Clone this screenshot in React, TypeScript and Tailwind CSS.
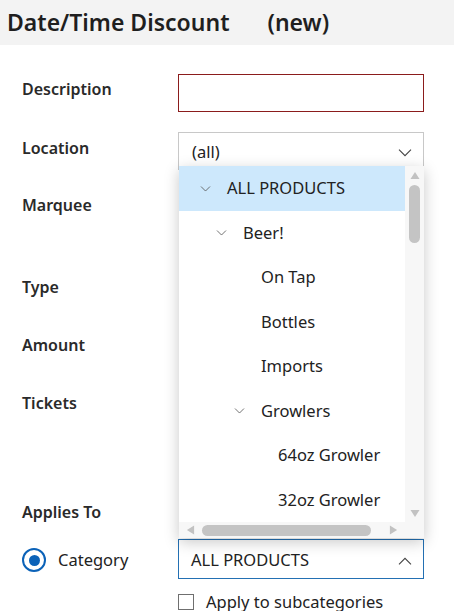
import React from 'react';

const font = "font-['Noto_Sans',sans-serif]";

interface ChevronProps {
  up?: boolean;
  className?: string;
}

const Chevron: React.FC<ChevronProps> = ({ up, className }) => (
  <svg viewBox="0 0 14 8" className={className} fill="none" stroke="currentColor" strokeWidth="1.1">
    <path d={up ? 'M1 7.3 7 1.3 13 7.3' : 'M1 0.7 7 6.7 13 0.7'} />
  </svg>
);

const Tri: React.FC<{ dir: 'up' | 'down' | 'left' | 'right'; className?: string }> = ({ dir, className }) => {
  const d = {
    up: 'M0 9 5 1 10 9Z',
    down: 'M0 1 10 1 5 9Z',
    left: 'M9 0 9 10 1 5Z',
    right: 'M1 0 1 10 9 5Z',
  }[dir];
  return (
    <svg viewBox="0 0 10 10" className={className} fill="currentColor">
      <path d={d} />
    </svg>
  );
};

const tree = [
  { label: 'ALL PRODUCTS', level: 0, open: true },
  { label: 'Beer!', level: 1, open: true },
  { label: 'On Tap', level: 2 },
  { label: 'Bottles', level: 2 },
  { label: 'Imports', level: 2 },
  { label: 'Growlers', level: 2, open: true },
  { label: '64oz Growler', level: 3 },
  { label: '32oz Growler', level: 3 },
];

const indent = ['pl-[21px]', 'pl-[37px]', 'pl-[55px]', 'pl-[72px]'];

const Row: React.FC<{ label: string; height: string; pt?: string; children?: React.ReactNode }> = ({
  label,
  height,
  pt = 'pt-[4px]',
  children,
}) => (
  <div className={`flex ${height}`}>
    <div className={`w-[156px] shrink-0 ${pt} text-[16px] leading-6 font-semibold text-[#2a2a2a]`}>{label}</div>
    <div className="relative w-[246px]">{children}</div>
  </div>
);

const Dropdown: React.FC = () => (
  <div className="absolute left-[1px] top-[34px] z-10 w-[245px] bg-white shadow-[0_4px_14px_rgba(0,0,0,0.22)]">
    <div className="flex">
      <div className="w-[226px]">
        {tree.map((item, i) => (
          <div
            key={item.label}
            className={`flex h-[44.5px] items-center pt-[1px] ${indent[item.level]} ${i === 0 ? 'bg-[#cde8fc]' : ''}`}
          >
            <div className="w-[27px] shrink-0">
              {item.open && <Chevron className="w-[11px] h-[6px] text-[#555]" />}
            </div>
            <span className="text-[16.5px] text-[#222] whitespace-nowrap">{item.label}</span>
          </div>
        ))}
      </div>
      <div className="flex w-[19px] flex-col items-center bg-[#f7f7f7] pt-[5px] pb-[4px]">
        <Tri dir="up" className="w-[10px] h-[9px] text-[#c2c2c2]" />
        <div className="mt-[5px] h-[58px] w-[11px] rounded-full bg-[#c4c4c4]" />
        <div className="flex-1" />
        <Tri dir="down" className="w-[10px] h-[9px] text-[#c2c2c2]" />
      </div>
    </div>
    <div className="flex h-[16px] items-center bg-[#f7f7f7]">
      <div className="flex w-[226px] items-center pl-[7px]">
        <Tri dir="left" className="w-[9px] h-[10px] text-[#c2c2c2]" />
        <div className="ml-[7px] h-[11px] w-[169px] rounded-full bg-[#c4c4c4]" />
        <div className="flex-1" />
        <Tri dir="right" className="mr-[7px] w-[9px] h-[10px] text-[#c2c2c2]" />
      </div>
    </div>
  </div>
);

export default function App() {
  return (
    <div className={`${font} w-[454px] h-[611px] overflow-hidden bg-white`}>
      <div className="flex h-[45px] items-center bg-[#f3f3f3] pl-[7px] text-[23px] font-semibold text-[#1f1f1f]">
        <span>Date/Time Discount</span>
        <span className="ml-[38px]">(new)</span>
      </div>

      <div className="pt-[29px] pl-[22px]">
        <Row label="Description" height="h-[58px]" pt="pt-[3px]">
          <div className="h-[38px] border border-[#8b1c1c] bg-white" />
        </Row>
        <Row label="Location" height="h-[57px]">
          <div className="flex h-[38px] items-center justify-between border border-[#c8c8c8] pl-[13px] pr-[11px] pt-[3px]">
            <span className="text-[16.5px] text-[#222]">(all)</span>
            <Chevron className="w-[14px] h-[8px] text-[#444]" />
          </div>
          <Dropdown />
        </Row>
        <Row label="Marquee" height="h-[82px]" />
        <Row label="Type" height="h-[58px]" />
        <Row label="Amount" height="h-[58px]" />
        <Row label="Tickets" height="h-[109px]" />
        <Row label="Applies To" height="h-[43px]" />

        <div className="flex h-[40px] items-center">
          <div className="flex w-[156px] shrink-0 items-center gap-[12px] pt-[2px]">
            <div className="flex h-[24px] w-[24px] items-center justify-center rounded-full border-[2px] border-[#0b62b8]">
              <div className="h-[11px] w-[11px] rounded-full bg-[#0b62b8]" />
            </div>
            <span className="text-[16.5px] text-[#222]">Category</span>
          </div>
          <div className="flex h-[40px] w-[246px] items-center justify-between border border-[#2370b3] pl-[12px] pr-[11px] pt-[3px]">
            <span className="text-[16.5px] text-[#222]">ALL PRODUCTS</span>
            <Chevron up className="w-[14px] h-[8px] text-[#444]" />
          </div>
        </div>

        <div className="flex items-center gap-[12px] pl-[156px] pt-[15px]">
          <div className="h-[16px] w-[16px] border-[1.5px] border-[#6f6f6f]" />
          <span className="text-[16.5px] leading-[16px] text-[#222]">Apply to subcategories</span>
        </div>
      </div>
    </div>
  );
}
